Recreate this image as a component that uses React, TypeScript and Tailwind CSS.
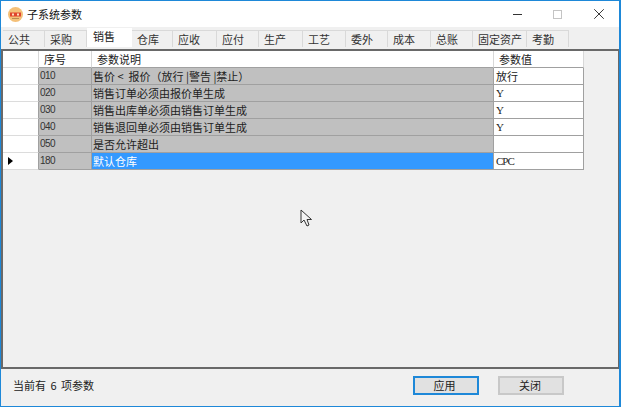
import { X } from "lucide-react";

const tabs = [
  { name: "公共", w: "w-[42px]" },
  { name: "采购", w: "w-[42px]" },
  { name: "销售", w: "w-[45px]" },
  { name: "仓库", w: "w-[41px]" },
  { name: "应收", w: "w-[44px]" },
  { name: "应付", w: "w-[42px]" },
  { name: "生产", w: "w-[44px]" },
  { name: "工艺", w: "w-[43px]" },
  { name: "委外", w: "w-[42px]" },
  { name: "成本", w: "w-[43px]" },
  { name: "总账", w: "w-[42px]" },
  { name: "固定资产", w: "w-[54px]" },
  { name: "考勤", w: "w-[42px]" },
];

const rows = [
  { no: "010", desc: "售价 <\u00a0 报价（放行 |警告 |禁止）", val: "放行" },
  { no: "020", desc: "销售订单必须由报价单生成", val: "Y" },
  { no: "030", desc: "销售出库单必须由销售订单生成", val: "Y" },
  { no: "040", desc: "销售退回单必须由销售订单生成", val: "Y" },
  { no: "050", desc: "是否允许超出", val: "" },
  { no: "180", desc: "默认仓库", val: "CPC", current: true },
];

function Logo() {
  return (
    <svg width="15" height="15" viewBox="0 0 15 15" className="shrink-0">
      <circle cx="7.5" cy="7.5" r="7.5" fill="#f4c078" />
      <rect x="2" y="5.5" width="11" height="4" fill="#e0442c" />
      <rect x="4" y="6.5" width="2" height="2" fill="#fbe3c0" />
      <rect x="9" y="6.5" width="2" height="2" fill="#fbe3c0" />
      <rect x="4" y="11" width="7" height="1" fill="#b98a50" />
    </svg>
  );
}

function Row({ no, desc, val, current }: { no: string; desc: string; val: string; current?: boolean }) {
  return (
    <div className="flex h-[17px]">
      <div className="flex w-[36px] items-center border-b border-r border-b-[#dcdcdc] border-r-[#a0a0a0] bg-white pl-[5px]">
        {current && <div className="h-0 w-0 border-y-[4px] border-l-[5px] border-y-transparent border-l-black" />}
      </div>
      <div className="flex w-[53px] items-center border-b border-r border-[#a0a0a0] bg-[#c0c0c0] pl-px font-['Liberation_Sans',sans-serif] text-[10px] tracking-[-0.5px] text-[#333]">
        {no}
      </div>
      <div
        className={`flex w-[402px] items-center border-b border-r border-[#a0a0a0] pl-px ${
          current ? "bg-[#3399ff] text-white" : "bg-[#c0c0c0] text-[#222]"
        }`}
      >
        {desc}
      </div>
      <div className="flex w-[90px] items-center border-b border-r border-[#a0a0a0] bg-white pl-[2px] font-['Liberation_Serif',serif] text-[11px] tracking-[-1px] text-[#222]">
        {val === "放行" ? <span className="font-['Noto_Sans_CJK_SC',sans-serif] tracking-normal">{val}</span> : val}
      </div>
    </div>
  );
}

export default function App() {
  return (
    <div className="relative flex h-[407px] w-[621px] flex-col overflow-hidden border border-r-2 border-[#1e88d8] bg-[#f0f0f0] font-['Noto_Sans_CJK_SC',sans-serif] text-[11px] leading-none text-[#222]">
      <div className="flex h-[26px] items-center bg-white pl-[7px]">
        <Logo />
        <span className="ml-[4px] text-[11px] text-[#111]">子系统参数</span>
        <div className="ml-auto flex items-center text-[#333]">
          <div className="h-px w-[9px] bg-[#333]" />
          <div className="ml-[31px] h-[9px] w-[9px] border border-[#c4c4c4]" />
          <X size={18} strokeWidth={1.3} className="ml-[28px] mr-[11px]" />
        </div>
      </div>

      <div className="flex h-[22px] pl-[2px]">
        {tabs.map((t) =>
          t.name === "销售" ? (
            <div key={t.name} className={`${t.w} mt-px flex h-[19px] items-center bg-white pb-[2px] pl-[6px]`}>
              {t.name}
            </div>
          ) : (
            <div
              key={t.name}
              className={`${t.w} mt-[3px] flex h-[17px] items-center border-r border-t border-[#d9d9d9] bg-[#f0f0f0] pl-[5px] text-[#333]`}
            >
              {t.name}
            </div>
          ),
        )}
      </div>

      <div className="flex h-[320px] flex-col border-b-2 border-l-2 border-r border-t-2 border-[#696969]">
        <div className="flex h-[17px]">
          <div className="w-[36px] border-b border-r border-b-[#dcdcdc] border-r-[#d8d8d8] bg-white" />
          <div className="flex w-[53px] items-center border-b border-r border-b-[#a0a0a0] border-r-[#d8d8d8] bg-white pl-[5px]">序号</div>
          <div className="flex w-[402px] items-center border-b border-r border-b-[#a0a0a0] border-r-[#d8d8d8] bg-white pl-[5px]">参数说明</div>
          <div className="flex w-[90px] items-center border-b border-r border-b-[#a0a0a0] border-r-[#d8d8d8] bg-white pl-[5px]">参数值</div>
        </div>
        {rows.map((r) => (
          <Row key={r.no} {...r} />
        ))}
      </div>

      <div className="flex flex-1 items-center pb-[4px] pl-[12px]">
        <span className="w-[80px] whitespace-nowrap text-[#222] [word-spacing:2px]">当前有 6 项参数</span>
        <button className="ml-[320px] h-[19px] w-[66px] border-2 border-[#1e88d8] bg-[#e1e1e1] pr-[3px] text-[11px] text-[#222]">
          应用
        </button>
        <button className="ml-[19px] h-[19px] w-[66px] border-2 border-[#c8c8c8] bg-[#e1e1e1] pr-[2px] text-[11px] text-[#222]">
          关闭
        </button>
      </div>

      <svg width="13" height="19" viewBox="0 0 13 19" className="absolute left-[299px] top-[208px]">
        <path d="M1 1 L1 14 L4 11 L7 17 L9 16 L7 10.5 L11.5 10.5 Z" fill="#f4f4f4" stroke="#333" strokeWidth="1" />
      </svg>
    </div>
  );
}
